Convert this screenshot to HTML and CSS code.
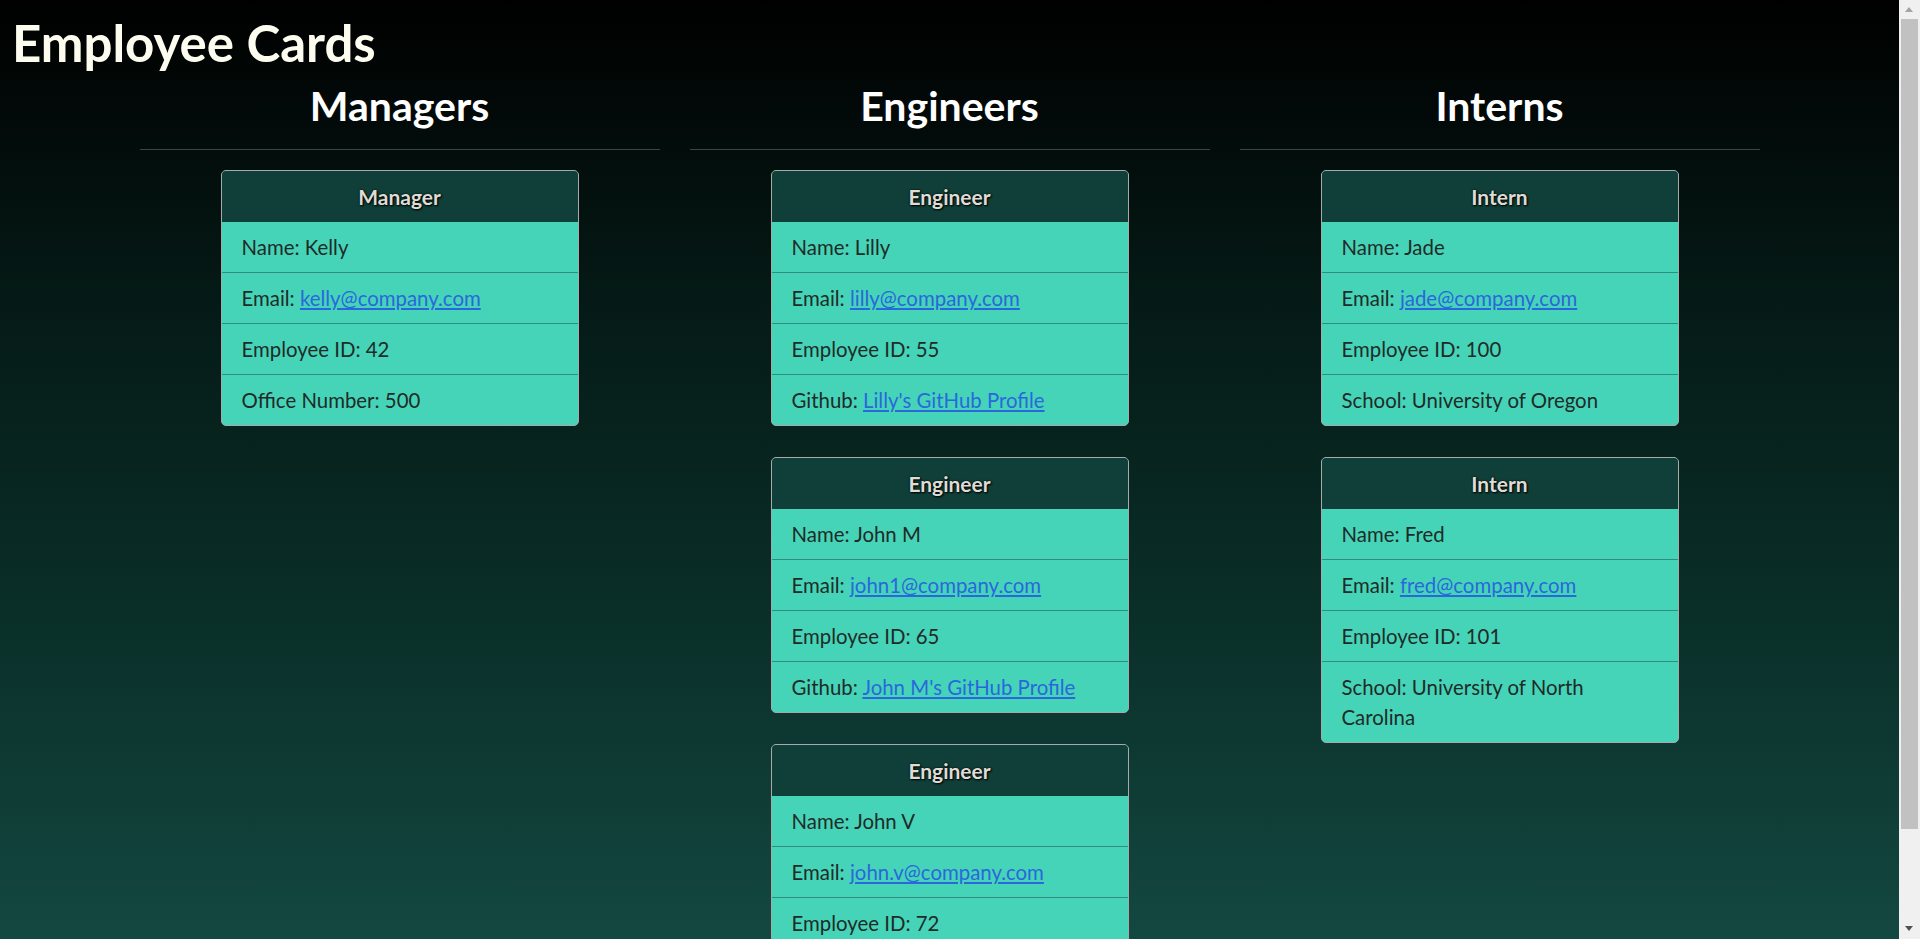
FILE: index.html
```html
<!DOCTYPE html>
<html lang="en">
<head>
<meta charset="utf-8">
<title>Employee Cards</title>
<link rel="stylesheet" href="styles.css">
</head>
<body>
<header class="page-header">
  <h1 class="page-title">Employee Cards</h1>
</header>
<main class="board">
  <section class="column">
    <h2 class="column-title">Managers</h2>
    <hr class="column-rule">
    <div class="card-stack">
      <article class="card">
        <div class="card-header">Manager</div>
        <ul class="card-list">
          <li class="card-item">Name: Kelly</li>
          <li class="card-item">Email: <a class="card-link" href="#">kelly@company.com</a></li>
          <li class="card-item">Employee ID: 42</li>
          <li class="card-item">Office Number: 500</li>
        </ul>
      </article>
    </div>
  </section>
  <section class="column">
    <h2 class="column-title">Engineers</h2>
    <hr class="column-rule">
    <div class="card-stack">
      <article class="card">
        <div class="card-header">Engineer</div>
        <ul class="card-list">
          <li class="card-item">Name: Lilly</li>
          <li class="card-item">Email: <a class="card-link" href="#">lilly@company.com</a></li>
          <li class="card-item">Employee ID: 55</li>
          <li class="card-item">Github: <a class="card-link" href="#">Lilly's GitHub Profile</a></li>
        </ul>
      </article>
      <article class="card">
        <div class="card-header">Engineer</div>
        <ul class="card-list">
          <li class="card-item">Name: John M</li>
          <li class="card-item">Email: <a class="card-link" href="#">john1@company.com</a></li>
          <li class="card-item">Employee ID: 65</li>
          <li class="card-item">Github: <a class="card-link" href="#">John M's GitHub Profile</a></li>
        </ul>
      </article>
      <article class="card">
        <div class="card-header">Engineer</div>
        <ul class="card-list">
          <li class="card-item">Name: John V</li>
          <li class="card-item">Email: <a class="card-link" href="#">john.v@company.com</a></li>
          <li class="card-item">Employee ID: 72</li>
          <li class="card-item">Github: <a class="card-link" href="#">John V's GitHub Profile</a></li>
        </ul>
      </article>
    </div>
  </section>
  <section class="column">
    <h2 class="column-title">Interns</h2>
    <hr class="column-rule">
    <div class="card-stack">
      <article class="card">
        <div class="card-header">Intern</div>
        <ul class="card-list">
          <li class="card-item">Name: Jade</li>
          <li class="card-item">Email: <a class="card-link" href="#">jade@company.com</a></li>
          <li class="card-item">Employee ID: 100</li>
          <li class="card-item">School: University of Oregon</li>
        </ul>
      </article>
      <article class="card">
        <div class="card-header">Intern</div>
        <ul class="card-list">
          <li class="card-item">Name: Fred</li>
          <li class="card-item">Email: <a class="card-link" href="#">fred@company.com</a></li>
          <li class="card-item">Employee ID: 101</li>
          <li class="card-item">School: University of North Carolina</li>
        </ul>
      </article>
    </div>
  </section>
</main>
<div class="scrollbar" aria-hidden="true">
  <span class="scroll-arrow scroll-arrow-up"></span>
  <span class="scroll-thumb"></span>
  <span class="scroll-arrow scroll-arrow-down"></span>
</div>
</body>
</html>
```

FILE: styles.css
```css
* {
  box-sizing: border-box;
}

body {
  margin: 0;
  padding: 0 21px 38px 0;
  font-family: Lato, "Noto Sans", sans-serif;
  color: #212529;
  background: linear-gradient(to bottom, #000000 0px, #051a16 300px, #0a2f29 620px, #134840 939px, #154d44 1045px);
}

.page-header {
  padding: 12px 12px 0;
}

.page-title {
  margin: 0;
  font-size: 51px;
  font-weight: 700;
  line-height: 62px;
  color: #fdfdef;
}

.board {
  width: 1650px;
  margin: 8px auto 0;
  display: flex;
}

.column {
  flex: 1 1 0;
  padding: 0 15px;
  display: flex;
  flex-direction: column;
  align-items: center;
}

.column-title {
  margin: 0;
  font-size: 41px;
  font-weight: 700;
  line-height: 48px;
  color: #ffffff;
  text-align: center;
}

.column-rule {
  align-self: stretch;
  margin: 19px 0 20px;
  border: 0;
  border-top: 1px solid #3d4442;
  height: 0;
}

.card-stack {
  display: flex;
  flex-direction: column;
  gap: 31px;
}

.card {
  width: 358px;
  border: 1px solid #a8aaa9;
  border-radius: 5px;
  overflow: hidden;
  background: #46d4b8;
}

.card-header {
  height: 51px;
  display: flex;
  align-items: center;
  justify-content: center;
  background: #0f3f38;
  color: #dedcd4;
  font-size: 21px;
  font-weight: 700;
  text-shadow: 1px 1px 2px #000, 0 0 2px #000;
}

.card-list {
  list-style: none;
  margin: 0;
  padding: 0;
}

.card-item {
  padding: 10px 26px 10px 20px;
  font-size: 20.4px;
  line-height: 30px;
  color: #1f2b28;
}

.card-item + .card-item {
  border-top: 1px solid #2f8f7c;
}

.card-link {
  color: #2a67dd;
  text-decoration: underline;
}

.scrollbar {
  position: fixed;
  top: 0;
  right: 0;
  width: 21px;
  height: 100vh;
  background: #f0f0f0;
}

.scroll-thumb {
  position: absolute;
  left: 2px;
  top: 19px;
  width: 17px;
  height: 810px;
  background: #c1c1c1;
}

.scroll-arrow {
  position: absolute;
  left: 6px;
  width: 0;
  height: 0;
  border-left: 4.5px solid transparent;
  border-right: 4.5px solid transparent;
}

.scroll-arrow-up {
  top: 7px;
  border-bottom: 5px solid #a3a3a3;
}

.scroll-arrow-down {
  bottom: 8px;
  border-top: 5px solid #505050;
}
```
